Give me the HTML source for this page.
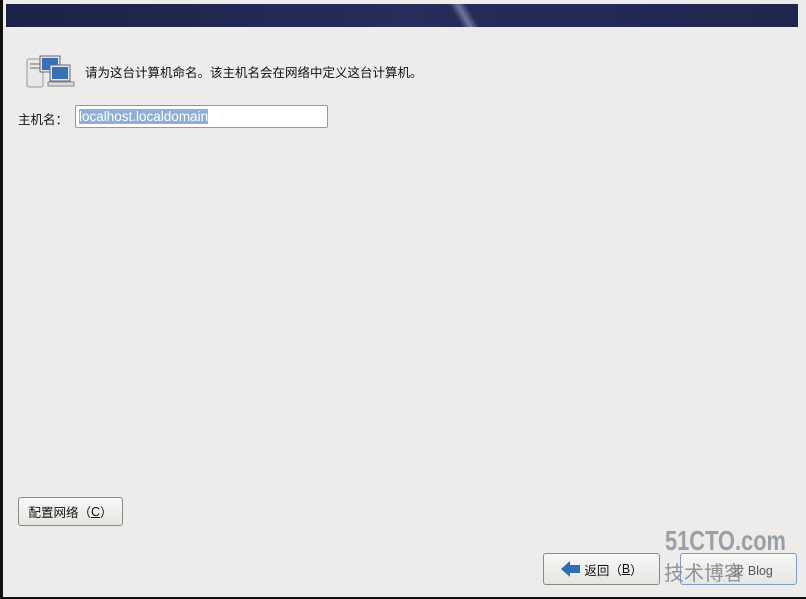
<!DOCTYPE html><html><head><meta charset="utf-8"><style>
body{margin:0;width:806px;height:599px;background:#111;position:relative;overflow:hidden;font-family:"Liberation Sans","Noto Sans CJK SC",sans-serif;}
.main{position:absolute;left:3px;top:0;width:803px;height:597px;background:#edecea;}
.hdr{position:absolute;left:6px;top:4px;height:23px;background:linear-gradient(90deg,#1c2148,#272d5c 50%,#20264f);width:792px;overflow:hidden}
.hdr .s{position:absolute;left:420px;top:-10px;width:80px;height:50px;background:linear-gradient(60deg,transparent 42%,rgba(200,205,230,.45) 50%,transparent 58%)}
.t{position:absolute;font-size:12.5px;color:#111}
.btn{position:absolute;border:1px solid #8a8a8a;border-radius:3px;background:linear-gradient(#f8f8f7,#e6e5e2);font-size:12.5px;color:#111;box-sizing:border-box;display:flex;align-items:center;justify-content:center}
</style></head><body>
<div class="main"></div>
<div class="hdr"><div class="s"></div></div>
<svg style="position:absolute;left:26px;top:54px" width="24" height="34"><rect x="1" y="5" width="16" height="28" rx="2" fill="#e8e8e8" stroke="#999"/><rect x="4" y="9" width="10" height="2" fill="#aaa"/><rect x="4" y="13" width="10" height="2" fill="#aaa"/></svg>
<svg style="position:absolute;left:38px;top:54px" width="40" height="34"><rect x="2" y="2" width="20" height="16" fill="#dfe8f2" stroke="#667"/><rect x="4" y="4" width="16" height="12" fill="#3a6fb0"/><rect x="12" y="11" width="20" height="16" fill="#dfe8f2" stroke="#667"/><rect x="14" y="13" width="16" height="12" fill="#3a6fb0"/><rect x="10" y="28" width="26" height="4" fill="#ddd" stroke="#888"/></svg>
<div class="t" style="left:85px;top:62px">请为这台计算机命名。该主机名会在网络中定义这台计算机。</div>
<div class="t" style="left:18px;top:109px">主机名：</div>
<div style="position:absolute;left:75px;top:105px;width:253px;height:23px;box-sizing:border-box;border:1px solid #7a9cc8;border-radius:2px;background:#fff"><span style="position:absolute;left:3px;top:3px;background:#8fafd8;color:#fff;font-size:13.5px;line-height:15px">localhost.localdomain</span></div>
<div class="btn" style="left:18px;top:497px;width:105px;height:29px">配置网络（<u>C</u>）</div>
<div class="btn" style="left:543px;top:553px;width:117px;height:32px"><svg width="22" height="18" style="margin-right:2px"><path d="M1 9 L10 1 V5 H20 V13 H10 V17 Z" fill="#2f6db5"/></svg>返回（<u>B</u>）</div>
<div class="btn" style="left:680px;top:553px;width:117px;height:32px;border-color:#7a9cc8;color:#555">&nbsp;&nbsp;&nbsp;&nbsp;&nbsp;&nbsp;&nbsp;&nbsp;步 Blog</div>
<div style="position:absolute;left:665px;top:525px;font:bold 28px 'Liberation Sans',sans-serif;color:#9aa0a8;transform:scaleX(0.78);transform-origin:left top">51CTO.com</div>
<div style="position:absolute;left:664px;top:557px;font-size:20px;color:#8d939b;font-family:'Liberation Sans','Noto Sans CJK SC',sans-serif">技术博客</div>
</body></html>
